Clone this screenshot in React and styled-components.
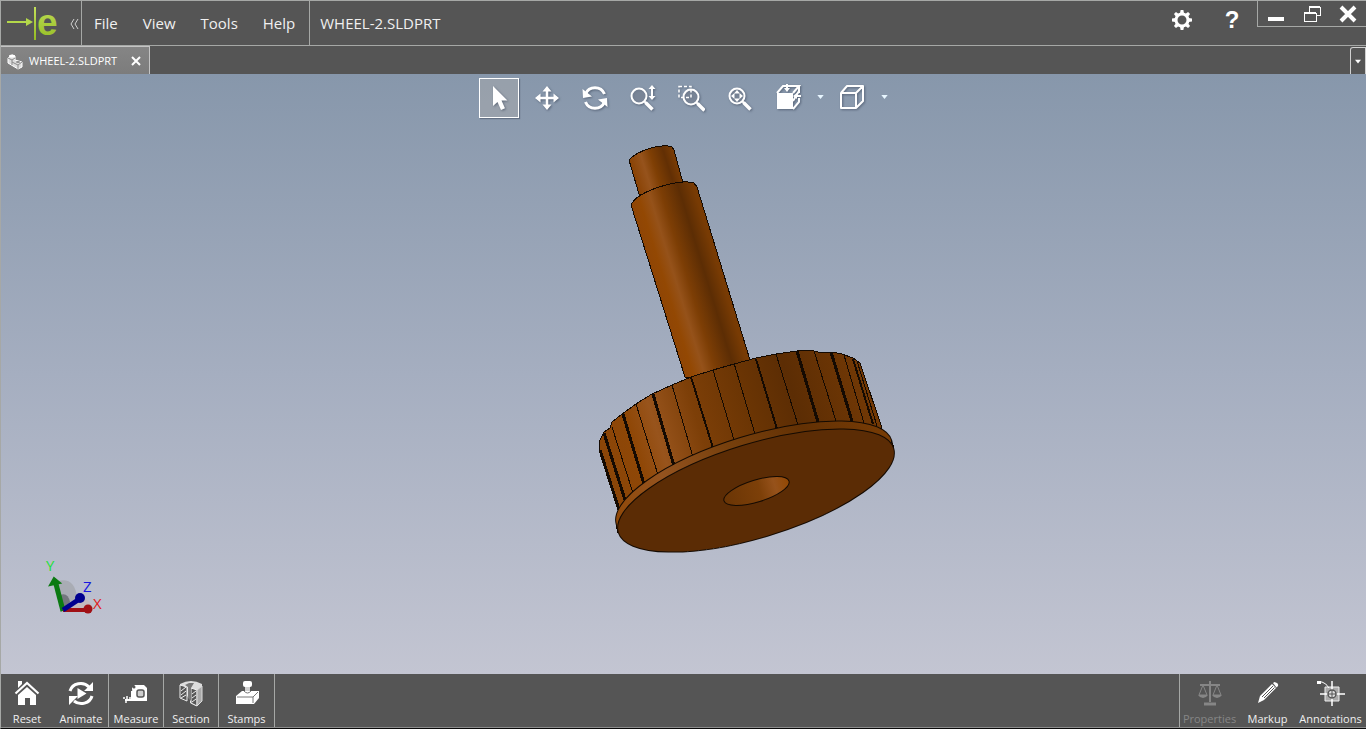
import React from 'react';
import styled, { createGlobalStyle } from 'styled-components';

const GlobalStyle = createGlobalStyle`
  *, *::before, *::after { box-sizing: border-box; }
  body {
    margin: 0;
    background: #000;
    color: #f0f0f0;
    font-family: "Open Sans", "Noto Sans", sans-serif;
  }
`;

const LINE = '#a6a8a6';
const BAR = '#555555';

const Window = styled.div`
  display: flex;
  flex-direction: column;
  min-height: 100vh;
  border-top: 1px solid ${LINE};
  border-left: 1px solid ${LINE};
  border-bottom: 1px solid #0a0a0a;
`;

const BareButton = styled.button`
  display: flex;
  align-items: center;
  justify-content: center;
  margin: 0;
  padding: 0;
  border: 0;
  background: none;
  color: inherit;
  font: inherit;
  svg { display: block; flex: none; }
`;

/* ---- title bar ---- */

const TitleBar = styled.header`
  display: flex;
  height: 45px;
  background: ${BAR};
  border-bottom: 1px solid ${LINE};
`;

const Brand = styled.div`
  display: flex;
  align-items: center;
  width: 81px;
  border-right: 1px solid ${LINE};
  svg { display: block; flex: none; overflow: visible; }
`;

const Menu = styled.nav`
  display: flex;
  align-items: center;
  gap: 25px;
  padding: 0 14px 0 12px;
  border-right: 1px solid ${LINE};
`;

const MenuItem = styled(BareButton)`
  font-size: 15px;
  line-height: 20px;
`;

const DocumentTitle = styled.h1`
  flex: 1;
  margin: 0;
  padding: 12px 10px;
  font-size: 15px;
  font-weight: 400;
  line-height: 20px;
`;

const HeaderTool = styled(BareButton)`
  width: 50px;
  height: 38px;
`;

const HelpTool = styled(HeaderTool)`
  font-family: "Liberation Sans", Arial, sans-serif;
  font-size: 24px;
  font-weight: 700;
  color: #fff;
`;

const WindowControls = styled.div`
  display: flex;
  height: 26px;
  border-left: 1px solid ${LINE};
  border-bottom: 1px solid ${LINE};
`;

const WindowButton = styled(BareButton)`
  width: 36px;
`;

/* ---- document tabs ---- */

const TabBar = styled.div`
  display: flex;
  justify-content: space-between;
  height: 28px;
  background: ${BAR};
`;

const Tab = styled.div`
  display: flex;
  align-items: center;
  width: 149px;
  padding: 0 8px 0 5px;
  background: linear-gradient(#858585, #7c7c7c);
  border-top: 1px solid #c4c4c4;
  border-right: 1px solid #c4c4c4;
  color: #fff;
  font-size: 11px;
  line-height: 16px;
  svg { display: block; flex: none; }
`;

const TabName = styled.span`
  flex: 1;
  padding-left: 5px;
  white-space: nowrap;
`;

const TabListButton = styled(BareButton)`
  width: 16px;
  height: 27px;
  margin-top: 1px;
  border: 1px solid #d0d0d0;
  border-bottom: 0;
  border-radius: 3px 0 0 0;
`;

/* ---- model view ---- */

const Viewport = styled.main`
  flex: 1;
  display: flex;
  flex-direction: column;
  align-items: center;
  padding-top: 4px;
  background: linear-gradient(#8797ab, #a5aec0 50%, #c3c5d2);
`;

const ViewTools = styled.div`
  display: flex;
  gap: 8px;
  padding-left: 6px;
`;

const ViewTool = styled(BareButton)`
  width: 40px;
  height: 40px;
  border: 1px solid ${(p) => (p.$active ? '#fff' : 'transparent')};
  background: ${(p) => (p.$active ? 'rgba(170, 170, 170, 0.45)' : 'none')};
  box-shadow: ${(p) => (p.$active ? '1px 1px 1px rgba(60, 70, 90, 0.5)' : 'none')};
  svg { filter: drop-shadow(1px 1px 1px rgba(50, 60, 80, 0.55)); }
`;

const SplitTools = styled.div`
  display: flex;
`;

const CaretTool = styled(BareButton)`
  width: 24px;
  height: 38px;
  padding-left: 3px;
`;

const Model = styled.svg`
  display: block;
  width: 430px;
  height: 412px;
  margin-top: 25px;
`;

const Triad = styled.svg`
  display: block;
  align-self: flex-start;
  width: 64px;
  height: 62px;
  margin: auto 0 56px 41px;
`;

/* ---- bottom bar ---- */

const BottomBar = styled.footer`
  display: flex;
  justify-content: space-between;
  background: ${BAR};
  border-bottom: 1px solid #8c8c8c;
`;

const ActionGroup = styled.div`
  display: flex;
  border-left: ${(p) => (p.$ruled ? `1px solid ${LINE}` : '0')};
`;

const Action = styled(BareButton)`
  flex-direction: column;
  justify-content: flex-start;
  gap: 4px;
  width: ${(p) => p.$width || 55}px;
  height: 53px;
  padding-top: 5px;
  border-right: 1px solid ${(p) => (p.$ruled ? LINE : 'transparent')};
  color: ${(p) => (p.disabled ? '#868686' : '#f0f0f0')};
  font-size: 11px;
  line-height: 16px;
  white-space: nowrap;
`;

/* ---- icons ---- */

const Icon = ({ w = 28, h = 28, children }) => (
  <svg width={w} height={h} viewBox={`0 0 ${w} ${h}`} fill="none" stroke="none" aria-hidden="true">
    {children}
  </svg>
);

const Logo = () => (
  <svg width="80" height="44" viewBox="1 1 80 44" role="img" aria-label="eDrawings">
    <defs>
      <linearGradient id="lime" x1="0" y1="0" x2="0" y2="1">
        <stop offset="0" stopColor="#c3e05a" />
        <stop offset="1" stopColor="#93bb22" />
      </linearGradient>
    </defs>
    <path d="M7 22H27" stroke="#b4d84a" strokeWidth="2" />
    <path d="M26 18L33 22L26 26Z" fill="#b4d84a" />
    <rect x="34" y="7" width="2" height="33" fill="url(#lime)" />
    <text x="37" y="35" fontFamily="Liberation Sans" fontWeight="700" fontSize="37" fill="url(#lime)">e</text>
    <path d="M74 19L71 24L74 29M78 19L75 24L78 29" fill="none" stroke="#cfcfcf" strokeWidth="1" />
  </svg>
);

const GearIcon = () => (
  <Icon w={22} h={22}>
    <circle cx="11" cy="11" r="6" stroke="#fff" strokeWidth="3" />
    {[0, 45, 90, 135, 180, 225, 270, 315].map((a) => (
      <path key={a} d="M9 4.5L9.6 1H12.4L13 4.5Z" fill="#fff" transform={`rotate(${a} 11 11)`} />
    ))}
  </Icon>
);

const PartIcon = () => (
  <Icon w={18} h={18}>
    <path d="M2 6L6 3L9 4V8L16 10V15L12 17L2 11Z" fill="#dcdcdc" stroke="#fff" />
    <path d="M2 6L6 8L9 6M6 8V13M6 10L12 13L16 10M12 13V17" stroke="#8b8b8b" />
    <ellipse cx="6" cy="4" rx="3" ry="1.5" fill="#fff" />
    <ellipse cx="12" cy="10" rx="2" ry="1" fill="#8b8b8b" />
  </Icon>
);

const CursorIcon = () => (
  <Icon>
    <path d="M8 2V22L12.500 18L16 26L20 24.300L16.500 16.500H22.500Z" fill="#fff" />
  </Icon>
);

const MoveIcon = () => (
  <Icon>
    <path d="M14 5V23M4 14H24" stroke="#fff" strokeWidth="2.500" />
    <path d="M14 2L9.500 7.500H18.500ZM14 26L9.500 20.500H18.500ZM2 14L7.500 9.500V18.500ZM26 14L20.500 9.500V18.500Z" fill="#fff" />
  </Icon>
);

const RotateIcon = () => (
  <Icon>
    <path d="M4.500 10A10.300 10.300 0 0 1 23.500 10M23.500 18A10.300 10.300 0 0 1 4.500 18" stroke="#fff" strokeWidth="3" />
    <path d="M1.500 5L2 14L11 12.500ZM26.500 23L26 14L17 15.500Z" fill="#fff" />
  </Icon>
);

const Lens = ({ x, y }) => (
  <g transform={`translate(${x} ${y})`}>
    <circle r="7.500" fill="rgba(130,140,155,0.5)" stroke="#fff" strokeWidth="2" />
    <path d="M5.500 5.500L7 7" stroke="#fff" strokeWidth="2" />
    <path d="M6.500 6.500L13.500 13.500" stroke="#fff" strokeWidth="3.500" />
  </g>
);

const ZoomIcon = () => (
  <Icon>
    <Lens x={10} y={12} />
    <path d="M23 4V13" stroke="#fff" strokeWidth="2" />
    <path d="M23 1L19.500 5H26.500ZM23 16L19.500 12H26.500Z" fill="#fff" />
  </Icon>
);

const ZoomAreaIcon = () => (
  <Icon>
    <Lens x={14} y={13} />
    <path d="M2 2.500H14V13.500H2Z" stroke="#fff" strokeWidth="1.500" strokeDasharray="3 2" />
  </Icon>
);

const ZoomFitIcon = () => (
  <Icon>
    <Lens x={12} y={12} />
    <path d="M12 6L15 9.500H9ZM12 18L15 14.500H9ZM6 12L9.500 9V15ZM18 12L14.500 9V15Z" fill="#fff" />
  </Icon>
);

const OrientIcon = () => (
  <Icon>
    <path d="M4 9H20V25H4Z" fill="#fff" />
    <path d="M4 9L10 2H26L20 9M20 25L26 18V14M26 2V9" stroke="#fff" strokeWidth="2" />
    <path d="M14 0V5M28 12H23M20 17L26 7" stroke="#fff" strokeWidth="2" />
    <path d="M14 8L11 4H17ZM20 12L24 9V15Z" fill="#fff" />
  </Icon>
);

const CubeIcon = () => (
  <Icon>
    <path d="M4 9H19V24H4ZM4 9L10 2H26L19 9M26 2V17L19 24" stroke="#fff" strokeWidth="2" strokeLinejoin="round" />
  </Icon>
);

const CaretIcon = ({ w = 7, h = 4, color = '#fff' }) => (
  <svg width={w} height={h} viewBox="0 0 8 5" aria-hidden="true">
    <path d="M0 0H8L4 5Z" fill={color} />
  </svg>
);

const HomeIcon = () => (
  <Icon>
    <path d="M2.500 14.500L14 4L25.500 14.500" stroke="#fff" strokeWidth="2.200" />
    <path d="M5 2H9V5L5 9Z" fill="#fff" />
    <path d="M14 8L23 16V26H17V19H12V26H5V16Z" fill="#fff" />
  </Icon>
);

const AnimateIcon = () => (
  <Icon>
    <path d="M3 12A11 10 0 0 1 22 8M25 17A11 10 0 0 1 7 22" stroke="#fff" strokeWidth="3" />
    <path d="M26 3V12H17ZM2 26V17H11Z" fill="#fff" />
    <path d="M10.500 9V20L19.500 14.500Z" fill="#fff" />
  </Icon>
);

const MeasureIcon = () => (
  <Icon>
    <path d="M10 9L13 6H22L25 9V22H11Z" fill="#fff" />
    <circle cx="12" cy="8" r="1.500" fill={BAR} />
    <rect x="15" y="11" width="7" height="7" rx="2" fill="#ccc" stroke={BAR} strokeWidth="1.500" />
    <path d="M10 12V21H3" stroke="#fff" strokeWidth="2" />
    <path d="M2 18V20M5 17V20M8 18V20M4 22V24" stroke="#fff" strokeWidth="1.500" />
  </Icon>
);

const SectionIcon = () => (
  <Icon>
    <path d="M3 5Q14 -1 25 5V22L19 27L13 24V12L9 21L3 18Z" fill="#ddd" />
    <path d="M3 6L10 8V22L3 19ZM14 9L20 11V27L14 24Z" fill={BAR} stroke="#eee" />
    <path d="M4 12L9 8M4 16L9 12M4 19L9 16M15 15L19 12M15 19L19 16M15 23L19 20" stroke="#eee" />
    <path d="M20 11L25 7V22L20 27Z" fill="#aaa" stroke="#ddd" />
    <path d="M8 6L12 4H17L14 9V22L11 19V8Z" fill="#777" />
  </Icon>
);

const StampIcon = () => (
  <Icon>
    <rect x="10" y="2" width="9" height="6" rx="2" fill="#fff" />
    <path d="M12 8H17V14H12Z" fill="#d0d0d0" />
    <path d="M3 17L9 12H26V19L21 25H3Z" fill="#fff" />
    <path d="M4 18H20L25 13M20 18V24" stroke="#777" />
    <path d="M11 12Q14.500 16 18 12" stroke="#777" />
  </Icon>
);

const ScaleIcon = () => (
  <Icon>
    <path d="M14 2V23M4 6H24" stroke="#868686" strokeWidth="2" />
    <path d="M8 25H20" stroke="#868686" strokeWidth="3" />
    <path d="M7 6L3 16H11ZM21 6L17 16H25Z" stroke="#868686" />
    <path d="M2 16H12Q10 19 7 19Q4 19 2 16ZM16 16H26Q24 19 21 19Q18 19 16 16Z" fill="#868686" />
  </Icon>
);

const PencilIcon = () => (
  <Icon>
    <path d="M4 24L6 17L18 5L22 9L10 21Z" fill="#fff" />
    <path d="M19 4L20.500 3Q25 4 24 7L22.500 8.500Z" fill="#fff" />
    <path d="M8 18L19 7M10 19L20.500 8.500" stroke={BAR} />
  </Icon>
);

const AnnotationIcon = () => (
  <Icon>
    <path d="M8 8H22V22H8Z" fill="#aaa" stroke="#eee" />
    <path d="M15 2V27M3 15H28" stroke="#fff" strokeWidth="1.500" />
    <circle cx="15" cy="15" r="4" fill="#ddd" stroke={BAR} strokeWidth="1.500" />
    <path d="M15 11V19M11 15H19" stroke={BAR} />
    <path d="M1 3H5Q9 4 12 9" stroke="#fff" />
    <rect x="0" y="2" width="4" height="3" fill="#fff" />
  </Icon>
);

/* ---- wheel model: tooth edges as [x1, y1, x2, y2, width] ---- */

const TEETH = [
  [600, 450, 619, 510, 3],
  [604, 433, 625, 500, 3],
  [612, 427, 633, 493, 1],
  [623, 414, 644, 484, 3],
  [636, 404, 658, 475, 1],
  [653, 394, 674, 466, 3],
  [672, 385, 693, 457, 1],
  [691, 377, 713, 448, 2],
  [713, 370, 734, 440, 1],
  [734, 363, 755, 434, 1],
  [756, 359, 777, 429, 2],
  [776, 354, 798, 425, 1],
  [797, 351, 818, 422, 3],
  [814, 351, 836, 421, 1],
  [831, 352, 852, 421, 3],
  [844, 355, 864, 423, 1],
  [853, 359, 873, 424, 2],
  [857, 361, 877, 426, 1],
];

const Wheel = () => (
  <Model viewBox="469 143 430 412" role="img" aria-label="Wheel part">
    <defs>
      <linearGradient id="shaft" gradientUnits="userSpaceOnUse" x1="631" y1="205" x2="693" y2="186">
        <stop offset="0" stopColor="#8f4505" />
        <stop offset="0.15" stopColor="#934803" />
        <stop offset="0.32" stopColor="#95521a" />
        <stop offset="0.5" stopColor="#7d3e05" />
        <stop offset="0.78" stopColor="#5c2d04" />
        <stop offset="1" stopColor="#783b04" />
      </linearGradient>
      <linearGradient id="tip" gradientUnits="userSpaceOnUse" x1="630" y1="162" x2="672" y2="149">
        <stop offset="0" stopColor="#8a4305" />
        <stop offset="0.28" stopColor="#96531c" />
        <stop offset="0.5" stopColor="#7f3f04" />
        <stop offset="0.8" stopColor="#622f04" />
        <stop offset="1" stopColor="#783b04" />
      </linearGradient>
      <linearGradient id="gear" gradientUnits="userSpaceOnUse" x1="608" y1="470" x2="872" y2="390">
        <stop offset="0" stopColor="#8a4508" />
        <stop offset="0.12" stopColor="#8f4706" />
        <stop offset="0.21" stopColor="#98541c" />
        <stop offset="0.36" stopColor="#7d3f08" />
        <stop offset="0.55" stopColor="#6b3504" />
        <stop offset="0.72" stopColor="#5c2d04" />
        <stop offset="1" stopColor="#733905" />
      </linearGradient>
      <linearGradient id="rim" gradientUnits="userSpaceOnUse" x1="616" y1="525" x2="891" y2="440">
        <stop offset="0" stopColor="#8f4705" />
        <stop offset="0.25" stopColor="#94531f" />
        <stop offset="0.5" stopColor="#77400d" />
        <stop offset="0.75" stopColor="#633104" />
        <stop offset="1" stopColor="#783c05" />
      </linearGradient>
      <linearGradient id="bore" x1="0" y1="0" x2="1" y2="0">
        <stop offset="0" stopColor="#6a3505" />
        <stop offset="0.55" stopColor="#7d4009" />
        <stop offset="0.78" stopColor="#96521b" />
        <stop offset="1" stopColor="#934803" />
      </linearGradient>
    </defs>
    <g stroke="#140a02" strokeLinejoin="round" shapeRendering="crispEdges">
      <path d="M639 194L629 160C638 150 662 143 672 147L674 150L683 183V196Z" fill="url(#tip)" />
      <path d="M685 377L631 205C637 191 680 178 694 183L697 187L750 360L740 380Z" fill="url(#shaft)" />
      <path
        d="M619 512L599 450L600 440L604 432L610 428L612 422L622 414L636 404L639 402L652 394L672 385L691 377L713 370L734 364L756 358L776 354L797 351L801 350L814 351L818 352L832 352L842 354L853 358L860 363L882 428L760 480Z"
        fill="url(#gear)"
      />
      {TEETH.map(([x1, y1, x2, y2, w]) => (
        <line key={x1} x1={x1} y1={y1} x2={x2} y2={y2} strokeWidth={w} />
      ))}
      <ellipse cx="754" cy="482.500" rx="144" ry="47" transform="rotate(-17 754 482.500)" fill="url(#rim)" />
      <path d="M616 525L618 533L894 448L891 440Z" fill="url(#rim)" stroke="none" />
      <path d="M616 525L618 533M891 440L894 448" />
      <ellipse cx="756" cy="490.500" rx="144" ry="47" transform="rotate(-17 756 490.500)" fill="#5b2c05" />
      <ellipse cx="756.500" cy="491" rx="34" ry="11" transform="rotate(-17 756.500 491)" fill="url(#bore)" />
    </g>
  </Model>
);

const AxisTriad = () => (
  <Triad viewBox="42 556 64 62" role="img" aria-label="Axes">
    <path d="M58 581Q75 577 77 598L63 611Z" fill="#a9acb4" />
    <path d="M60 595Q68 592 70 602L63 611Z" fill="#74777e" />
    <path d="M78 598Q92 598 91 609L64 611Z" fill="#c3b9be" />
    <path d="M63 611L56 584" stroke="#0b7a12" strokeWidth="5" />
    <path d="M54 578L50 585L60 583Z" fill="#0b7a12" stroke="#0b7a12" strokeWidth="2" />
    <path d="M63 610H88" stroke="#a01015" strokeWidth="4" />
    <circle cx="88" cy="609" r="4.500" fill="#a01015" />
    <path d="M63 610L78 600" stroke="#00008f" strokeWidth="5" />
    <circle cx="80" cy="598" r="5" fill="#00008f" />
    <g fontFamily="Open Sans" fontWeight="400" fontSize="15">
      <text x="46" y="571" fill="#1fe03a">Y</text>
      <text x="83" y="592" fill="#1818e0">Z</text>
      <text x="93" y="609" fill="#e01818">X</text>
    </g>
  </Triad>
);

export default function App() {
  return (
    <>
      <GlobalStyle />
      <Window>
        <TitleBar>
          <Brand><Logo /></Brand>
          <Menu>
            {['File', 'View', 'Tools', 'Help'].map((name) => (
              <MenuItem key={name} type="button">{name}</MenuItem>
            ))}
          </Menu>
          <DocumentTitle>WHEEL-2.SLDPRT</DocumentTitle>
          <HeaderTool type="button" aria-label="Settings"><GearIcon /></HeaderTool>
          <HelpTool type="button" aria-label="Help">?</HelpTool>
          <WindowControls>
            <WindowButton type="button" aria-label="Minimize">
              <Icon w={18} h={18}><rect x="1" y="12" width="16" height="4" fill="#fff" /></Icon>
            </WindowButton>
            <WindowButton type="button" aria-label="Restore">
              <Icon w={18} h={18}>
                <g shapeRendering="crispEdges">
                  <path d="M6 7V2H17V10H13M1 8H13V16H1Z" stroke="#fff" />
                  <path d="M6 2H17M1 8H13" stroke="#fff" strokeWidth="2" />
                </g>
              </Icon>
            </WindowButton>
            <WindowButton type="button" aria-label="Close">
              <Icon w={18} h={18}><path d="M2 2L16 16M16 2L2 16" stroke="#fff" strokeWidth="4" /></Icon>
            </WindowButton>
          </WindowControls>
        </TitleBar>

        <TabBar>
          <Tab>
            <PartIcon />
            <TabName>WHEEL-2.SLDPRT</TabName>
            <BareButton type="button" aria-label="Close tab">
              <Icon w={10} h={10}><path d="M1 1L9 9M9 1L1 9" stroke="#fff" strokeWidth="2" /></Icon>
            </BareButton>
          </Tab>
          <TabListButton type="button" aria-label="Open documents"><CaretIcon w={6} h={5} /></TabListButton>
        </TabBar>

        <Viewport>
          <ViewTools>
            <ViewTool type="button" $active aria-label="Select"><CursorIcon /></ViewTool>
            <ViewTool type="button" aria-label="Pan"><MoveIcon /></ViewTool>
            <ViewTool type="button" aria-label="Rotate"><RotateIcon /></ViewTool>
            <ViewTool type="button" aria-label="Zoom"><ZoomIcon /></ViewTool>
            <ViewTool type="button" aria-label="Zoom to area"><ZoomAreaIcon /></ViewTool>
            <ViewTool type="button" aria-label="Zoom to fit"><ZoomFitIcon /></ViewTool>
            <SplitTools>
              <ViewTool type="button" aria-label="View orientation"><OrientIcon /></ViewTool>
              <CaretTool type="button" aria-label="More orientations"><CaretIcon color="#e8f6ff" /></CaretTool>
              <ViewTool type="button" aria-label="Display style"><CubeIcon /></ViewTool>
              <CaretTool type="button" aria-label="More display styles"><CaretIcon color="#e8f6ff" /></CaretTool>
            </SplitTools>
          </ViewTools>
          <Wheel />
          <AxisTriad />
        </Viewport>

        <BottomBar>
          <ActionGroup>
            <Action type="button" $width={53}><HomeIcon />Reset</Action>
            <Action type="button" $ruled><AnimateIcon />Animate</Action>
            <Action type="button" $ruled><MeasureIcon />Measure</Action>
            <Action type="button" $ruled><SectionIcon />Section</Action>
            <Action type="button" $ruled $width={56}><StampIcon />Stamps</Action>
          </ActionGroup>
          <ActionGroup $ruled>
            <Action type="button" $width={60} disabled><ScaleIcon />Properties</Action>
            <Action type="button" $width={56}><PencilIcon />Markup</Action>
            <Action type="button" $width={70}><AnnotationIcon />Annotations</Action>
          </ActionGroup>
        </BottomBar>
      </Window>
    </>
  );
}
